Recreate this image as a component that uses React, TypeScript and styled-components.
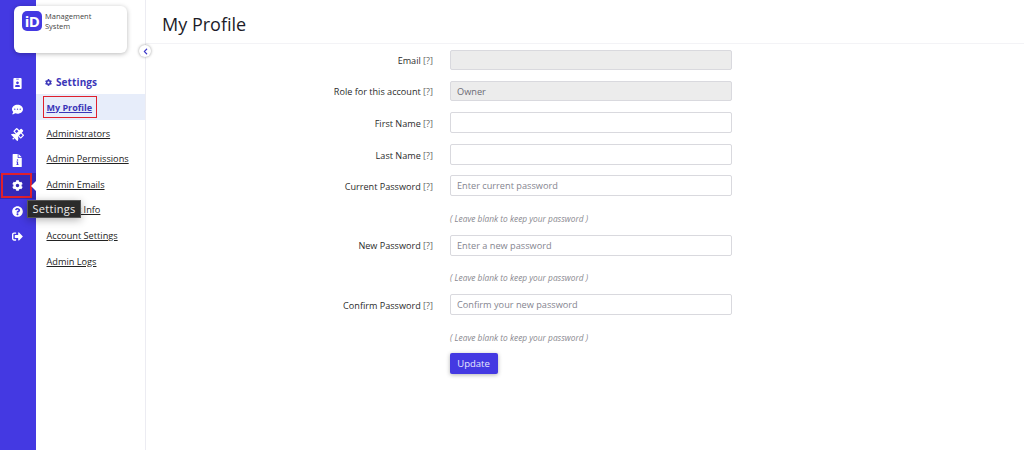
import styled, { createGlobalStyle } from 'styled-components';
import {
  FaChevronLeft,
  FaCog,
  FaCommentDots,
  FaIdBadge,
  FaQuestionCircle,
  FaSatellite,
  FaSignOutAlt,
} from 'react-icons/fa';

const GlobalStyle = createGlobalStyle`
  html, body {
    margin: 0;
    padding: 0;
    background: #fff;
    font-family: "Open Sans", "Noto Sans", sans-serif;
  }
  * {
    box-sizing: border-box;
  }
`;

const Page = styled.div`
  display: flex;
  width: 1024px;
  height: 450px;
  overflow: hidden;
  position: relative;
`;

const IconRail = styled.nav`
  width: 36px;
  flex: none;
  background: #4439e2;
  display: flex;
  flex-direction: column;
  padding-top: 71px;
`;

const RailItem = styled.div<{ $active?: boolean }>`
  position: relative;
  height: 25.5px;
  padding-right: 2px;
  display: flex;
  align-items: center;
  justify-content: center;
  color: #fff;
  background: ${({ $active }) => ($active ? '#3529b8' : 'transparent')};
`;

const Highlight = styled.span`
  position: absolute;
  left: 1px;
  top: 0;
  width: 31px;
  height: 25px;
  border: 2px solid #e0202c;
`;

const Caret = styled.span`
  position: absolute;
  right: 0;
  top: 8px;
  border-top: 5px solid transparent;
  border-bottom: 5px solid transparent;
  border-right: 5px solid #fff;
`;

const Tooltip = styled.div`
  position: absolute;
  left: 27px;
  top: 200px;
  width: 54px;
  height: 18px;
  background: #2b2b2b;
  border: 1px solid #555;
  color: #eee;
  font-size: 11px;
  line-height: 16px;
  letter-spacing: 0.3px;
  text-align: center;
  box-shadow: 0 2px 8px rgba(0, 0, 0, 0.3);
  z-index: 5;
`;

const SidePanel = styled.aside`
  width: 110px;
  flex: none;
  border-right: 1px solid #ececf2;
  padding-top: 74px;
`;

const LogoCard = styled.div`
  position: absolute;
  left: 14px;
  top: 6px;
  width: 113px;
  height: 47px;
  background: #fff;
  border-radius: 6px;
  box-shadow: 0 1px 5px rgba(0, 0, 0, 0.28);
  display: flex;
  align-items: flex-start;
  gap: 3px;
  padding: 5px 8px;
  z-index: 3;
`;

const LogoMark = styled.div`
  width: 20px;
  height: 20px;
  border-radius: 5px;
  background: #4439e2;
  color: #fff;
  font-size: 15px;
  line-height: 20px;
  font-weight: 700;
  text-align: center;
  letter-spacing: -0.5px;
`;

const LogoText = styled.div`
  font-size: 7.5px;
  line-height: 9.5px;
  color: #444;
  margin-top: 1px;
`;

const CollapseButton = styled.button`
  position: absolute;
  left: 139px;
  top: 45px;
  width: 12px;
  height: 12px;
  padding: 0;
  border: none;
  border-radius: 50%;
  background: #fff;
  color: #3a35c8;
  font-size: 7px;
  display: flex;
  align-items: center;
  justify-content: center;
  box-shadow: 0 0 3px rgba(0, 0, 0, 0.4);
  z-index: 3;
`;

const SideHeading = styled.div`
  display: flex;
  align-items: center;
  gap: 4px;
  padding-left: 9px;
  height: 16px;
  color: #3b36b8;
  font-size: 10px;
  letter-spacing: 0.1px;
  font-weight: 700;
  margin-bottom: 4px;
`;

const SideList = styled.ul`
  list-style: none;
  margin: 0;
  padding: 0;
`;

const SideItem = styled.li<{ $active?: boolean }>`
  position: relative;
  height: ${({ $active }) => ($active ? '26px' : '25.6px')};
  margin-bottom: ${({ $active }) => ($active ? '0.4px' : '0')};
  padding-left: 10.5px;
  display: flex;
  align-items: center;
  background: ${({ $active }) => ($active ? '#e7edfa' : 'transparent')};
`;

const SideLink = styled.a<{ $active?: boolean }>`
  font-size: ${({ $active }) => ($active ? '9px' : '9.2px')};
  font-weight: ${({ $active }) => ($active ? 700 : 400)};
  color: ${({ $active }) => ($active ? '#3b36b8' : '#222')};
  text-decoration: underline;
  white-space: nowrap;
`;

const ItemHighlight = styled.span`
  position: absolute;
  left: 7px;
  top: 2px;
  width: 54px;
  height: 22px;
  border: 1.5px solid #e0202c;
`;

const Main = styled.main`
  flex: 1;
  min-width: 0;
`;

const Header = styled.header`
  height: 44px;
  padding: 12px 0 0 16px;
  border-bottom: 1px solid #f3f3f6;
`;

const Title = styled.h1`
  margin: 0;
  font-size: 18px;
  line-height: 25px;
  font-weight: 400;
  color: #1c1c28;
`;

const Form = styled.form`
  display: flex;
  flex-direction: column;
  padding-top: 6px;
`;

const Field = styled.div<{ $gap: number }>`
  display: grid;
  grid-template-columns: 287px 282px;
  column-gap: 17px;
  align-items: center;
  margin-bottom: ${({ $gap }) => $gap}px;
`;

const Label = styled.label`
  padding-top: 1px;
  text-align: right;
  font-size: 9.1px;
  color: #2b2b2b;
  white-space: nowrap;
`;

const Help = styled.span`
  color: #666;
`;

const Input = styled.input<{ $height: number }>`
  width: 100%;
  height: ${({ $height }) => $height}px;
  padding: 0 6px;
  border: 1px solid #d9d9de;
  border-radius: 2px;
  background: #fff;
  color: #6b6b75;
  font-family: inherit;
  font-size: 9.2px;

  &::placeholder {
    color: #85858f;
    opacity: 1;
  }

  &:disabled {
    background: #ececec;
    opacity: 1;
  }
`;

const HintRow = styled.div`
  padding-left: 304px;
  height: 12px;
  line-height: 12px;
  margin-bottom: 10px;
  font-size: 8.35px;
  font-style: italic;
  color: #8a8a90;
  white-space: nowrap;
`;

const SubmitRow = styled.div`
  display: flex;
  padding-left: 303.5px;
  margin-top: -0.5px;
`;

const SubmitButton = styled.button`
  width: 48px;
  height: 21px;
  padding: 0;
  border: none;
  border-radius: 2px;
  background: #4439e2;
  color: #e8e8ff;
  font-family: inherit;
  font-size: 9.5px;
  box-shadow: 0 1px 4px rgba(0, 0, 0, 0.3);
`;

// document with a cut-out "i", not in the icon set
const FileInfoIcon = ({ size }: { size: number }) => (
  <svg width={size} height={size} viewBox="0 0 512 512" fill="currentColor">
    <path
      fillRule="evenodd"
      d="M88 0h176v136c0 13 11 24 24 24h136v328c0 13-11 24-24 24H88c-13 0-24-11-24-24V24C64 11 75 0 88 0zM296 0l128 128H296zM226 240a30 30 0 1 0 60 0a30 30 0 1 0-60 0zM212 296v32h20v72h-20v32h88v-32h-20V296z"
    />
  </svg>
);

const railIcons = [
  { Icon: FaIdBadge, size: 11 },
  { Icon: FaCommentDots, size: 11 },
  { Icon: FaSatellite, size: 13 },
  { Icon: FileInfoIcon, size: 13 },
  { Icon: FaCog, size: 11 },
  { Icon: FaQuestionCircle, size: 11 },
  { Icon: FaSignOutAlt, size: 11 },
];

const sideLinks = ['Administrators', 'Admin Permissions', 'Admin Emails', 'Account Info', 'Account Settings', 'Admin Logs'];

const passwordFields = [
  { label: 'Current Password', placeholder: 'Enter current password' },
  { label: 'New Password', placeholder: 'Enter a new password' },
  { label: 'Confirm Password', placeholder: 'Confirm your new password' },
];

const HelpMark = () => <Help>[?]</Help>;

export default function App() {
  return (
    <Page>
      <GlobalStyle />

      <IconRail>
        {railIcons.map(({ Icon, size }, i) => (
          <RailItem key={i} $active={i === 4}>
            <Icon size={size} />
            {i === 4 && (
              <>
                <Highlight />
                <Caret />
              </>
            )}
          </RailItem>
        ))}
      </IconRail>

      <LogoCard>
        <LogoMark>iD</LogoMark>
        <LogoText>
          Management
          <br />
          System
        </LogoText>
      </LogoCard>

      <CollapseButton type="button">
        <FaChevronLeft />
      </CollapseButton>

      <Tooltip>Settings</Tooltip>

      <SidePanel>
        <SideHeading>
          <FaCog size={7} />
          Settings
        </SideHeading>
        <SideList>
          <SideItem $active>
            <SideLink $active>My Profile</SideLink>
            <ItemHighlight />
          </SideItem>
          {sideLinks.map((link) => (
            <SideItem key={link}>
              <SideLink>{link}</SideLink>
            </SideItem>
          ))}
        </SideList>
      </SidePanel>

      <Main>
        <Header>
          <Title>My Profile</Title>
        </Header>
        <Form>
          <Field $gap={11}>
            <Label>
              Email <HelpMark />
            </Label>
            <Input $height={20} disabled />
          </Field>
          <Field $gap={11}>
            <Label>
              Role for this account <HelpMark />
            </Label>
            <Input $height={20} disabled value="Owner" readOnly />
          </Field>
          <Field $gap={11}>
            <Label>
              First Name <HelpMark />
            </Label>
            <Input $height={21} />
          </Field>
          <Field $gap={10}>
            <Label>
              Last Name <HelpMark />
            </Label>
            <Input $height={21} />
          </Field>
          {passwordFields.map((field) => (
            <div key={field.label}>
              <Field $gap={16.5}>
                <Label>
                  {field.label} <HelpMark />
                </Label>
                <Input $height={21} type="password" placeholder={field.placeholder} />
              </Field>
              <HintRow>( Leave blank to keep your password )</HintRow>
            </div>
          ))}
          <SubmitRow>
            <SubmitButton type="button">Update</SubmitButton>
          </SubmitRow>
        </Form>
      </Main>
    </Page>
  );
}
